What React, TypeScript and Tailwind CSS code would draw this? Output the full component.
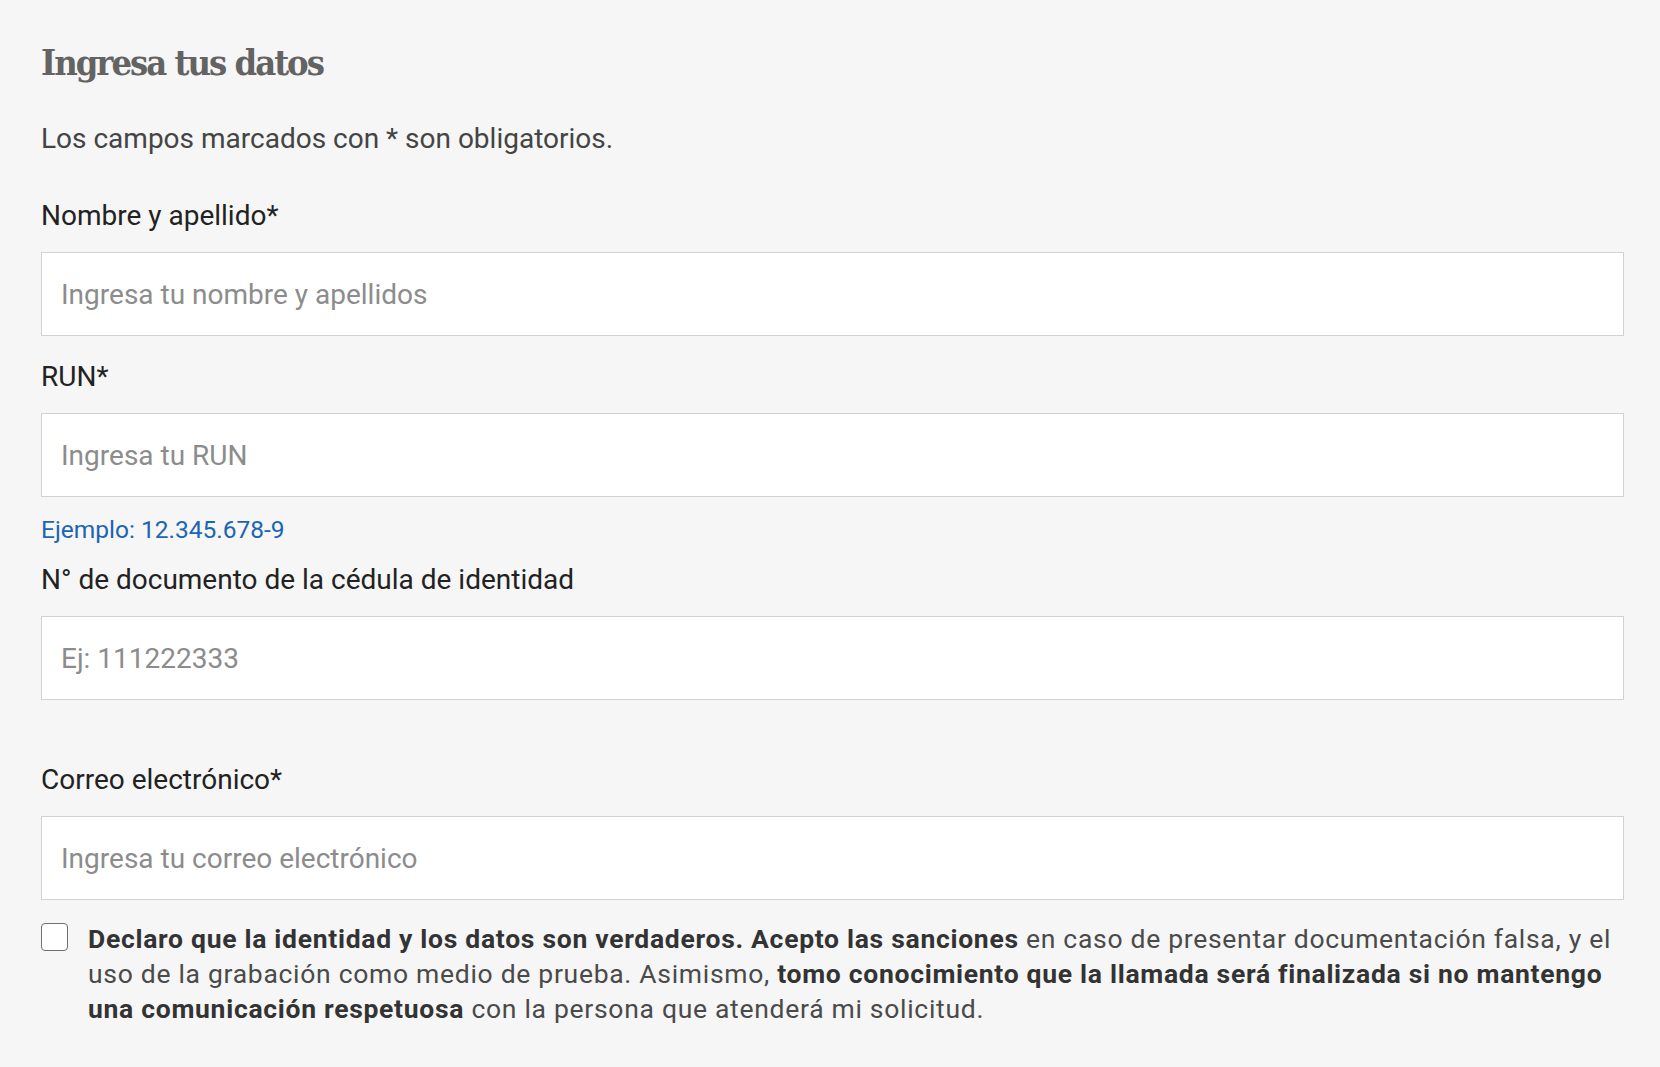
import type { ReactNode } from "react";

const body = { fontFamily: "Roboto, 'Liberation Sans', sans-serif" };

function Field({ label, placeholder, className = "" }: { label: string; placeholder: string; className?: string }) {
  return (
    <div className={className}>
      <label className="block text-[28px] leading-[40px] text-[#222]">{label}</label>
      <input
        type="text"
        placeholder={placeholder}
        className="mt-[16px] block h-[84px] w-full border border-[#d2d2d2] bg-white px-[19px] text-[28px] text-[#222] outline-none placeholder:text-[#8c8c8c]"
      />
    </div>
  );
}

function Strong({ children }: { children: ReactNode }) {
  return <strong className="font-bold text-[#333]">{children}</strong>;
}

export default function App() {
  return (
    <main className="min-h-[1067px] bg-[#f6f6f6] pl-[41px] pr-[36px] pt-[40px]" style={body}>
      <h2
        className="text-[36px] font-bold leading-[44px] tracking-[-2px] text-[#636363] font-stretch-condensed"
        style={{ fontFamily: "'DejaVu Serif Condensed', 'DejaVu Serif', serif" }}
      >
        Ingresa tus datos
      </h2>

      <p className="mt-[35px] text-[28px] leading-[40px] text-[#444]">
        Los campos marcados con * son obligatorios.
      </p>

      <Field className="mt-[37px]" label="Nombre y apellido*" placeholder="Ingresa tu nombre y apellidos" />
      <Field className="mt-[21px]" label="RUN*" placeholder="Ingresa tu RUN" />
      <p className="mt-[16px] text-[24.5px] leading-[34px] text-[#1b65b3]">Ejemplo: 12.345.678-9</p>
      <Field className="mt-[13px]" label="N° de documento de la cédula de identidad" placeholder="Ej: 111222333" />
      <Field className="mt-[60px]" label="Correo electrónico*" placeholder="Ingresa tu correo electrónico" />

      <div className="mt-[21px] flex items-start gap-[20px]">
        <div className="mt-[2px] h-[28px] w-[27px] shrink-0 rounded-[4px] border-[1.5px] border-[#6f6f6f] bg-white" />
        <p className="text-[26.5px] leading-[35px] tracking-[0.7px] text-[#4a4a4a]">
          <Strong>Declaro que la identidad y los datos son verdaderos. Acepto las sanciones</Strong> en caso de
          presentar documentación falsa, y el uso de la grabación como medio de prueba. Asimismo,{" "}
          <Strong>tomo conocimiento que la llamada será finalizada si no mantengo una comunicación respetuosa</Strong>{" "}
          con la persona que atenderá mi solicitud.
        </p>
      </div>
    </main>
  );
}
